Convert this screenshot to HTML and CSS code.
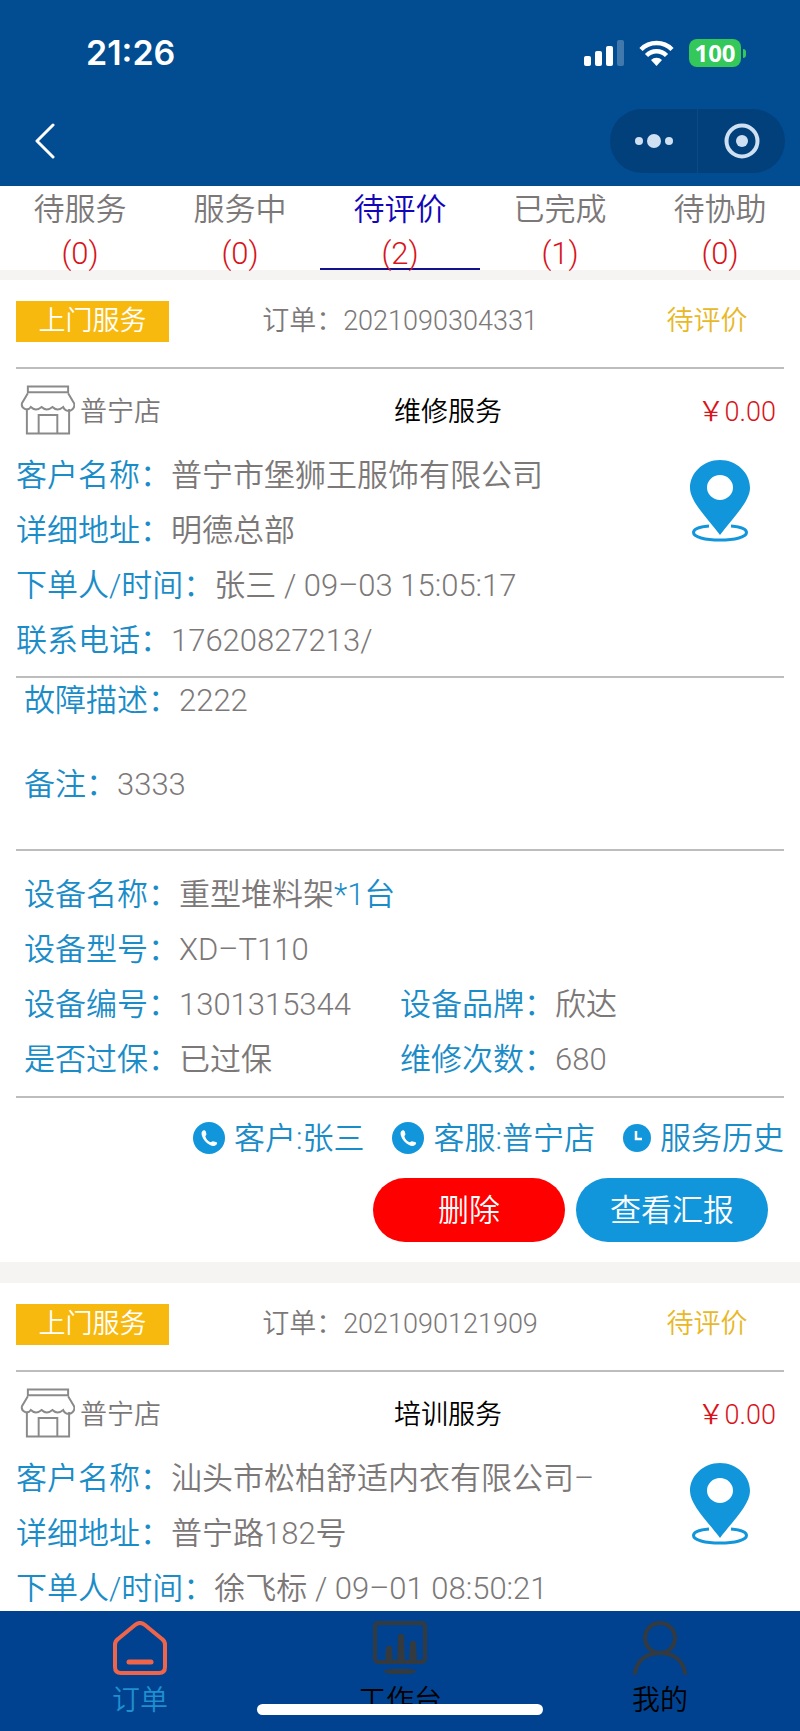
FILE: index.html
```html
<!DOCTYPE html>
<html lang="zh-CN">
<head>
<meta charset="utf-8">
<meta name="viewport" content="width=device-width, initial-scale=1">
<title>订单</title>
<link rel="stylesheet" href="styles.css">
</head>
<body>
<svg class="sprite" aria-hidden="true">
  <symbol id="shop" viewBox="0 0 56 52">
    <g fill="none" stroke="#8a8a8a" stroke-width="2">
      <path d="M8 2H49V8H8Z"/>
      <path d="M8 9 2 19a5 5 0 0 0 9 4q5 5 11 0q5 5 11 0q5 5 11 0a5 5 0 0 0 11-4L49 9"/>
      <path d="M7 25V50H50V25M19 50V31H38V50"/>
    </g>
  </symbol>
  <symbol id="pin" viewBox="0 0 62 84">
    <path fill="none" stroke="#1296db" stroke-width="3" d="M20 67C9 68 4.500 70.500 4.500 73.500C4.500 78 16 81 31 81S57.500 78 57.500 73.500C57.500 70.500 53 68 42 67"/>
    <path fill="#1296db" fill-rule="evenodd" d="M31 1C14 1 1 14 1 29C1 43 20 61 31 76C42 61 61 43 61 29C61 14 48 1 31 1ZM31 16A13 12.500 0 1 1 31 41A13 12.500 0 1 1 31 16Z"/>
  </symbol>
  <symbol id="phone" viewBox="0 0 32 32">
    <circle cx="16" cy="16" r="16" fill="#1296db"/>
    <path fill="#fff" d="M9 9.500C10.500 7.500 12.200 8 12.800 9.600L13.400 12C13.600 13 12.500 13.500 12.400 14.500C13 17 15 19.300 17.500 20.200C18.500 20.200 19 19 20 19.200L23 20C24.600 20.600 24.400 22 23 23C21.500 24.500 19 24 17 23C13 21 10 17.500 9 14C8.500 12.500 8.300 10.800 9 9.500Z"/>
  </symbol>
  <symbol id="clock" viewBox="0 0 28 28">
    <circle cx="14" cy="14" r="14" fill="#1296db"/>
    <path d="M13 7V15H19" fill="none" stroke="#fff" stroke-width="2.500"/>
  </symbol>
</svg>

<header class="top">
  <div class="status">
    <span class="time">21:26</span>
    <div class="signals">
      <svg width="40" height="26" viewBox="0 0 40 26" fill="#fff" aria-hidden="true">
        <rect x="0" y="16" width="7" height="10" rx="2"/><rect x="11" y="11" width="7" height="15" rx="2"/><rect x="22" y="6" width="7" height="20" rx="2"/><rect x="33" y="0" width="7" height="26" rx="2" opacity=".25"/>
      </svg>
      <svg width="35" height="26" viewBox="0 0 35 26" aria-hidden="true">
        <g fill="none" stroke="#fff" stroke-width="4.500"><path d="M2 9.500A22 22 0 0 1 33 9.500"/><path d="M7.500 15.500A14 14 0 0 1 27.500 15.500"/></g>
        <path fill="#fff" d="M12 20A8 8 0 0 1 23 20L17.500 26Z"/>
      </svg>
      <div class="battery"><span class="charge">100</span><span class="cap"></span></div>
    </div>
  </div>
  <div class="nav">
    <button class="back" aria-label="返回"><svg width="20" height="36" viewBox="0 0 20 36"><path d="M18 2 2 18 18 34" fill="none" stroke="#fff" stroke-width="3" stroke-linecap="round" stroke-linejoin="round"/></svg></button>
    <div class="capsule">
      <button class="cap-btn" aria-label="更多"><svg width="40" height="16" viewBox="0 0 40 16" fill="#cfe0f2"><circle cx="5" cy="8" r="4"/><circle cx="20" cy="8" r="7"/><circle cx="35" cy="8" r="4"/></svg></button>
      <button class="cap-btn" aria-label="关闭"><svg width="36" height="36" viewBox="0 0 36 36"><circle cx="18" cy="18" r="15.500" fill="none" stroke="#cfe0f2" stroke-width="4"/><circle cx="18" cy="18" r="6" fill="#cfe0f2"/></svg></button>
    </div>
  </div>
</header>

<nav class="tabs">
  <a class="tab" href="#">待服务<span class="count">(0)</span></a>
  <a class="tab" href="#">服务中<span class="count">(0)</span></a>
  <a class="tab active" href="#">待评价<span class="count">(2)</span></a>
  <a class="tab" href="#">已完成<span class="count">(1)</span></a>
  <a class="tab" href="#">待协助<span class="count">(0)</span></a>
</nav>

<main class="list">
  <article class="card">
    <div class="head"><span class="badge">上门服务</span><span class="order">订单：2021090304331</span><span class="state">待评价</span></div>
    <div class="shop-row"><span class="shop"><svg class="shop-icon"><use href="#shop"/></svg>普宁店</span><span class="kind">维修服务</span><span class="price">￥0.00</span></div>
    <div class="info">
      <div class="lines">
        <p class="line"><span class="label">客户名称：</span>普宁市堡狮王服饰有限公司</p>
        <p class="line"><span class="label">详细地址：</span>明德总部</p>
        <p class="line"><span class="label">下单人/时间：</span>张三 / 09–03 15:05:17</p>
        <p class="line"><span class="label">联系电话：</span>17620827213/</p>
      </div>
      <button class="locate" aria-label="地图"><svg class="pin-icon"><use href="#pin"/></svg></button>
    </div>
    <div class="notes">
      <p class="note"><span class="label">故障描述：</span>2222</p>
      <p class="note"><span class="label">备注：</span>3333</p>
    </div>
    <div class="device">
      <p class="line wide"><span class="label">设备名称：</span>重型堆料架<span class="label">*1台</span></p>
      <p class="line wide"><span class="label">设备型号：</span>XD–T110</p>
      <p class="line"><span class="label">设备编号：</span>1301315344</p>
      <p class="line"><span class="label">设备品牌：</span>欣达</p>
      <p class="line"><span class="label">是否过保：</span>已过保</p>
      <p class="line"><span class="label">维修次数：</span>680</p>
    </div>
    <div class="contacts">
      <a class="contact" href="#"><svg class="contact-icon"><use href="#phone"/></svg>客户:张三</a>
      <a class="contact" href="#"><svg class="contact-icon"><use href="#phone"/></svg>客服:普宁店</a>
      <a class="contact" href="#"><svg class="contact-icon clock-icon"><use href="#clock"/></svg>服务历史</a>
    </div>
    <div class="actions"><button class="btn danger">删除</button><button class="btn">查看汇报</button></div>
  </article>

  <article class="card">
    <div class="head"><span class="badge">上门服务</span><span class="order">订单：2021090121909</span><span class="state">待评价</span></div>
    <div class="shop-row"><span class="shop"><svg class="shop-icon"><use href="#shop"/></svg>普宁店</span><span class="kind">培训服务</span><span class="price">￥0.00</span></div>
    <div class="info">
      <div class="lines">
        <p class="line"><span class="label">客户名称：</span>汕头市松柏舒适内衣有限公司–</p>
        <p class="line"><span class="label">详细地址：</span>普宁路182号</p>
        <p class="line"><span class="label">下单人/时间：</span>徐飞标 / 09–01 08:50:21</p>
      </div>
      <button class="locate" aria-label="地图"><svg class="pin-icon"><use href="#pin"/></svg></button>
    </div>
  </article>
</main>

<footer class="bar">
  <a class="item on" href="#">
    <svg width="54" height="54" viewBox="0 0 54 54" fill="none" stroke="#f0654a" stroke-width="4" stroke-linecap="round" stroke-linejoin="round"><path d="M22 4Q27 0 32 4L49 18Q52 20 52 24V46Q52 52 46 52H8Q2 52 2 46V24Q2 20 5 18Z"/><path d="M16 41H38" stroke-width="5"/></svg>订单</a>
  <a class="item" href="#">
    <svg width="54" height="54" viewBox="0 0 54 54" fill="none" stroke="#333a40" stroke-width="4" stroke-linejoin="round"><rect x="2" y="2" width="50" height="39" rx="3"/><path d="M14 41 15 27 17 27 18 41ZM26 41 27 15 29 15 30 41ZM38 41 39 22 41 22 42 41Z"/><path d="M12 50.500 18 49H36L42 50.500 36 52H18Z" stroke-width="2" fill="#333a40"/></svg>工作台</a>
  <a class="item" href="#">
    <svg width="54" height="54" viewBox="0 0 54 54" fill="none" stroke="#333a40" stroke-width="4" stroke-linecap="round"><circle cx="27" cy="17" r="15"/><path d="M2 52C4 38 15 32 27 32S50 38 52 52"/></svg>我的</a>
  <span class="home-line"></span>
</footer>
</body>
</html>
```
FILE: styles.css
```css
* { box-sizing: border-box; }

body {
  margin: 0;
  height: 100vh;
  display: flex;
  flex-direction: column;
  overflow: hidden;
  background: #f5f4f3;
  color: #7c7878;
  font-family: Roboto, "Noto Sans CJK SC", sans-serif;
  font-size: 31px;
  font-weight: 350;
}

a { color: inherit; text-decoration: none; }
p { margin: 0; }
button { border: 0; padding: 0; background: none; color: inherit; font: inherit; }
svg { display: block; flex: none; }
.sprite { position: absolute; width: 0; height: 0; }

/* Header */
.top { flex: none; background: #024d91; color: #fff; }
.status {
  display: flex;
  justify-content: space-between;
  align-items: center;
  height: 106px;
  padding: 0 54px 0 86px;
}
.time { font: 600 34px/40px Inter, sans-serif; }
.signals { display: flex; align-items: center; gap: 15px; }
.battery { display: flex; align-items: center; gap: 2px; }
.charge {
  width: 52px;
  border-radius: 8px;
  background: #34c759;
  font: 700 24px/28px "Noto Sans", sans-serif;
  text-align: center;
}
.cap { width: 3px; height: 9px; border-radius: 0 4px 4px 0; background: #34c759; }
.nav {
  display: flex;
  justify-content: space-between;
  align-items: flex-start;
  height: 80px;
  padding: 3px 15px 0 35px;
}
.back { height: 64px; }
.capsule {
  display: flex;
  width: 175px;
  height: 64px;
  border-radius: 32px;
  background: #02407b;
}
.cap-btn { flex: 1; display: flex; align-items: center; justify-content: center; }
.cap-btn + .cap-btn { border-left: 1px solid #0a4a87; }

/* Order state tabs */
.tabs { flex: none; display: flex; margin-bottom: 10px; background: #fff; }
.tab {
  flex: 1;
  height: 84px;
  padding-top: 2px;
  border-bottom: 2px solid transparent;
  text-align: center;
  line-height: 44px;
}
.tab.active { color: #1206b8; border-color: #12128c; }
.count { display: block; color: #d8141a; line-height: 44px; }

/* Order cards */
.list { flex: 1; min-height: 0; overflow: hidden; }
.card { margin-bottom: 21px; padding: 0 16px 20px; background: #fff; }
.head {
  display: grid;
  grid-template-columns: 1fr 2fr 1fr;
  align-items: center;
  height: 89px;
  border-bottom: 2px solid #bdbdbd;
  padding-bottom: 5px;
  font-size: 27px;
  line-height: 41px;
}
.badge { width: 153px; background: #f8b90e; color: #fff; text-align: center; }
.order { text-align: center; }
.state { text-align: center; color: #e8b828; padding-left: 38px; }
.shop-row {
  display: grid;
  grid-template-columns: 1fr 1fr 1fr;
  align-items: center;
  height: 79px;
  padding-top: 2px;
  font-size: 27px;
}
.shop { display: flex; align-items: center; gap: 5px; padding-left: 4px; }
.shop-icon { width: 55px; height: 52px; }
.kind { color: #000; text-align: center; padding-left: 96px; white-space: nowrap; }
.price { color: #d8141a; text-align: right; padding-right: 8px; }
.info { display: flex; justify-content: space-between; }
.line { line-height: 55px; white-space: nowrap; }
.label { color: #1a8cc8; }
.locate { align-self: flex-start; margin: 11px 33px 0 0; }
.pin-icon { width: 62px; height: 84px; }
.notes {
  margin-top: 8px;
  padding: 3px 8px 0;
  border-top: 2px solid #bdbdbd;
  border-bottom: 2px solid #bdbdbd;
}
.note { height: 84px; line-height: 40px; }
.device {
  display: grid;
  grid-template-columns: 1fr 1fr;
  padding: 16px 8px 9px;
  border-bottom: 2px solid #bdbdbd;
}
.wide { grid-column: 1 / -1; }
.contacts { display: flex; justify-content: flex-end; gap: 28px; padding-top: 16px; color: #1a8cc8; }
.contact { display: flex; align-items: center; gap: 9px; line-height: 50px; }
.contact-icon { width: 32px; height: 32px; margin-bottom: 2px; }
.clock-icon { width: 28px; height: 28px; }
.actions { display: flex; justify-content: flex-end; gap: 11px; padding: 14px 16px 0 0; }
.btn {
  width: 192px;
  height: 64px;
  padding-bottom: 6px;
  border-radius: 32px;
  background: #1296db;
  color: #fff;
}
.danger { background: #f00; }

/* Bottom bar */
.bar {
  position: relative;
  flex: none;
  display: flex;
  height: 120px;
  padding: 10px 10px 0;
  background: #00428f;
  color: #000;
}
.item {
  flex: 1;
  display: flex;
  flex-direction: column;
  align-items: center;
  gap: 5px;
  font-size: 28px;
  line-height: 42px;
}
.item.on { color: #1f8fd0; }
.home-line {
  position: absolute;
  left: 50%;
  bottom: 16px;
  width: 286px;
  height: 11px;
  margin-left: -143px;
  border-radius: 6px;
  background: #fff;
}
```
